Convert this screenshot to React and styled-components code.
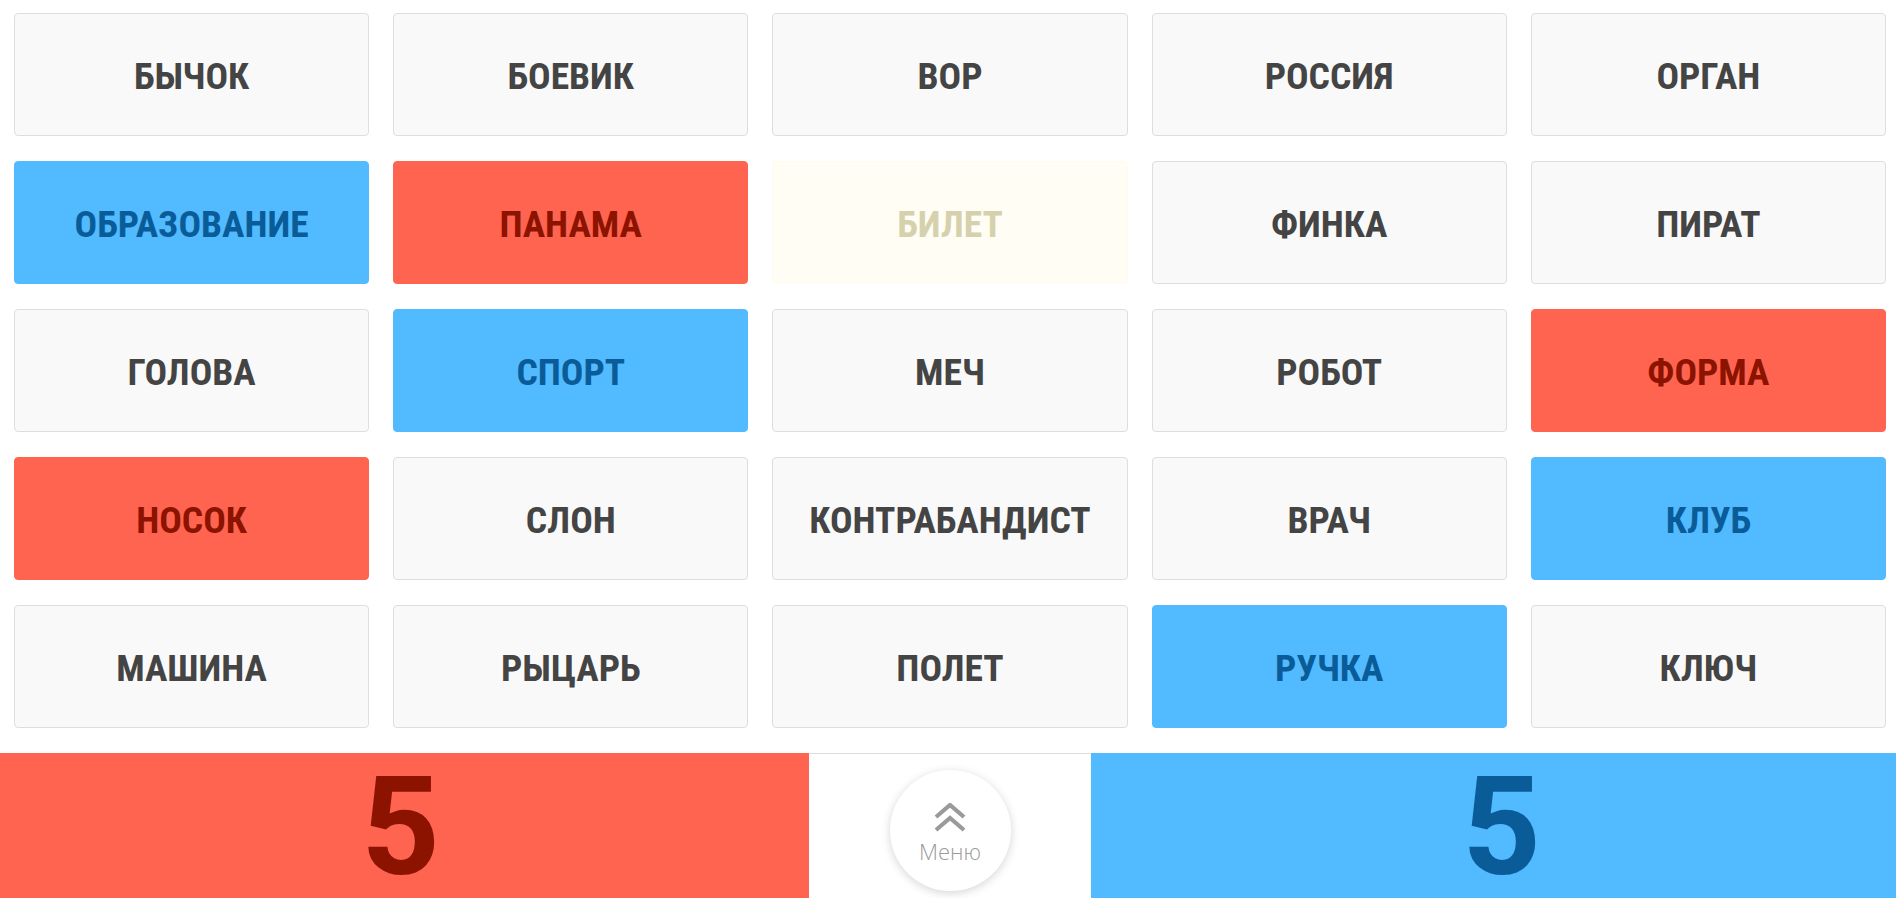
import React from "react";
import styled, { createGlobalStyle } from "styled-components";

const GlobalStyle = createGlobalStyle`
  html, body {
    margin: 0;
    padding: 0;
    background: #ffffff;
    overflow: hidden;
  }
  body {
    font-family: "Roboto", "Liberation Sans", sans-serif;
  }
`;

const palette = {
  neutral: { bg: "#f9f9f9", border: "#dedede", color: "#444444" },
  red: { bg: "#ff6450", border: "#ff6450", color: "#8b1300" },
  blue: { bg: "#52baff", border: "#52baff", color: "#0a5c98" },
  beige: { bg: "#fffdf4", border: "#fffbf0", color: "#d6d1ad" },
};

const words = [
  ["БЫЧОК", "neutral"],
  ["БОЕВИК", "neutral"],
  ["ВОР", "neutral"],
  ["РОССИЯ", "neutral"],
  ["ОРГАН", "neutral"],
  ["ОБРАЗОВАНИЕ", "blue"],
  ["ПАНАМА", "red"],
  ["БИЛЕТ", "beige"],
  ["ФИНКА", "neutral"],
  ["ПИРАТ", "neutral"],
  ["ГОЛОВА", "neutral"],
  ["СПОРТ", "blue"],
  ["МЕЧ", "neutral"],
  ["РОБОТ", "neutral"],
  ["ФОРМА", "red"],
  ["НОСОК", "red"],
  ["СЛОН", "neutral"],
  ["КОНТРАБАНДИСТ", "neutral"],
  ["ВРАЧ", "neutral"],
  ["КЛУБ", "blue"],
  ["МАШИНА", "neutral"],
  ["РЫЦАРЬ", "neutral"],
  ["ПОЛЕТ", "neutral"],
  ["РУЧКА", "blue"],
  ["КЛЮЧ", "neutral"],
];

const Page = styled.div`
  display: flex;
  flex-direction: column;
  height: 898px;
`;

const Board = styled.div`
  display: grid;
  grid-template-columns: repeat(5, 1fr);
  grid-auto-rows: 123px;
  column-gap: 24px;
  row-gap: 25px;
  padding: 13px 10px 25px 14px;
`;

const Card = styled.div`
  display: flex;
  align-items: center;
  justify-content: center;
  box-sizing: border-box;
  border-radius: 4px;
  background: ${(p) => palette[p.$tone].bg};
  border: 1px solid ${(p) => palette[p.$tone].border};
  color: ${(p) => palette[p.$tone].color};
  font-family: "Roboto Condensed", "Roboto", "Liberation Sans Narrow", sans-serif;
  font-stretch: 75%;
  font-weight: 700;
  font-size: 37.5px;
  padding-top: 2px;
  user-select: none;
`;

const ScoreBar = styled.div`
  flex: 1;
  display: grid;
  grid-template-columns: 809px 282px 1fr;
  min-height: 0;
`;

const Score = styled.div`
  display: flex;
  justify-content: center;
  padding-top: 14px;
  background: ${(p) => (p.$team === "red" ? "#ff6450" : "#52baff")};
  color: ${(p) => (p.$team === "red" ? "#8b1300" : "#0a5c98")};
  font-family: "Roboto", "Liberation Sans", sans-serif;
  font-weight: 700;
  font-size: 137px;
  line-height: 120px;
`;

const ScoreValue = styled.span`
  transform: translateX(${(p) => p.$shift}px);
`;

const MenuCell = styled.div`
  display: flex;
  justify-content: center;
  padding-top: 16px;
  border-top: 1px solid #dddddd;
  background: #ffffff;
`;

const MenuButton = styled.button`
  width: 121px;
  height: 121px;
  border-radius: 50%;
  border: none;
  background: #ffffff;
  box-shadow: 0 2px 10px rgba(0, 0, 0, 0.17);
  display: flex;
  flex-direction: column;
  align-items: center;
  justify-content: center;
  gap: 7px;
  padding: 4px 0 0;
  cursor: pointer;
`;

const MenuLabel = styled.span`
  font-family: "Open Sans", "Liberation Sans", sans-serif;
  font-weight: 300;
  font-size: 22px;
  line-height: 22px;
  color: #9b9b9b;
`;

const ChevronsUp = () => (
  <svg width="34" height="30" viewBox="0 0 34 30" fill="none">
    <path d="M3 14 L17 2 L31 14" stroke="#9a9a9a" strokeWidth="4.2" />
    <path d="M3 27 L17 15 L31 27" stroke="#9a9a9a" strokeWidth="4.2" />
  </svg>
);

export default function App() {
  return (
    <Page>
      <GlobalStyle />
      <Board>
        {words.map(([word, tone]) => (
          <Card key={word} $tone={tone}>
            {word}
          </Card>
        ))}
      </Board>
      <ScoreBar>
        <Score $team="red">
          <ScoreValue $shift={-4}>5</ScoreValue>
        </Score>
        <MenuCell>
          <MenuButton>
            <ChevronsUp />
            <MenuLabel>Меню</MenuLabel>
          </MenuButton>
        </MenuCell>
        <Score $team="blue">
          <ScoreValue $shift={8}>5</ScoreValue>
        </Score>
      </ScoreBar>
    </Page>
  );
}
